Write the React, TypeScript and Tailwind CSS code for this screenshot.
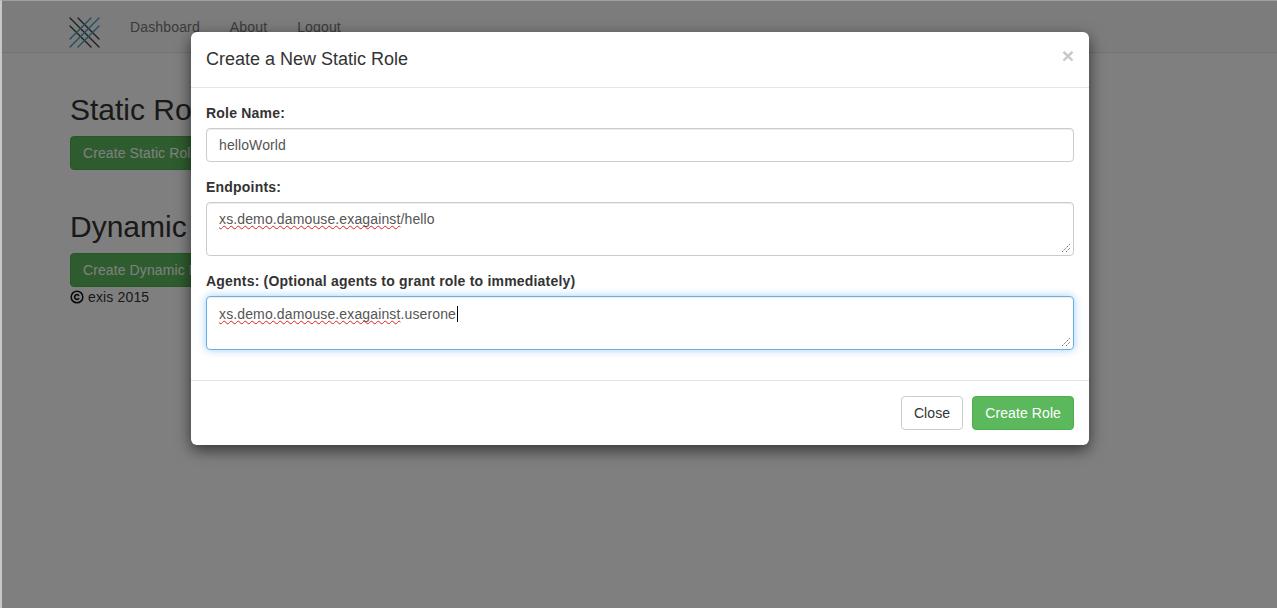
import { Copyright } from "lucide-react";

function Logo() {
  return (
    <svg width="32" height="32" viewBox="69 16 32 32" className="shrink-0">
      <g stroke="#3c3c3c" strokeWidth="1.3" strokeLinecap="round">
        <line x1="70" y1="18" x2="99" y2="47" />
        <line x1="78" y1="18" x2="99" y2="39" />
        <line x1="70" y1="26" x2="91" y2="47" />
      </g>
      <g stroke="#3a9cc0" strokeWidth="1.3" strokeLinecap="round">
        <line x1="70" y1="47" x2="99" y2="18" />
        <line x1="70" y1="39" x2="91" y2="18" />
        <line x1="78" y1="47" x2="99" y2="26" />
      </g>
    </svg>
  );
}

function Misspelt({ children }: { children: React.ReactNode }) {
  return <span className="underline decoration-wavy decoration-[#e02020] decoration-1 underline-offset-1 [text-decoration-skip-ink:none]">{children}</span>;
}

function Grip() {
  return (
    <svg width="10" height="10" viewBox="0 0 10 10" className="absolute right-0.5 bottom-0.5">
      <path d="M1 9L9 1M5 9L9 5" stroke="#666" strokeWidth="1" strokeDasharray="1.4 1" />
    </svg>
  );
}

function Area({ focused, children }: { focused?: boolean; children: React.ReactNode }) {
  return (
    <div className={`relative h-[54px] rounded border px-3 py-1.5 text-[14px] leading-5 tracking-[0.13px] text-[#555] ${focused ? "border-[#66afe9] shadow-[inset_0_1px_1px_rgba(0,0,0,0.075),0_0_8px_rgba(102,175,233,0.6)]" : "border-[#ccc] shadow-[inset_0_1px_1px_rgba(0,0,0,0.075)]"}`}>
      {children}
      <Grip />
    </div>
  );
}

export default function App() {
  return (
    <div className="relative h-[608px] w-[1277px] overflow-hidden bg-white font-['Liberation_Sans',Arial,sans-serif] text-[14px] leading-5 text-[#333]">
      <nav className="flex h-[53px] items-start border-b border-[#e7e7e7] bg-[#f8f8f8] pl-[69px] pt-[16px]">
        <Logo />
        <div className="ml-[29px] mt-[1px] flex gap-[30px] tracking-[0.15px] text-[#777]">
          <span>Dashboard</span>
          <span>About</span>
          <span>Logout</span>
        </div>
      </nav>
      <main className="pl-[70px]">
        <h1 className="mt-[40px] text-[30px] leading-[33px] font-normal">Static Roles</h1>
        <button className="mt-[10px] block h-[34px] rounded border border-[#4cae4c] bg-[#5cb85c] px-3 tracking-[0.1px] text-white">Create Static Role</button>
        <h1 className="mt-[40px] text-[30px] leading-[33px] font-normal">Dynamic Roles</h1>
        <button className="mt-[10px] block h-[34px] rounded border border-[#4cae4c] bg-[#5cb85c] px-3 tracking-[0.1px] text-white">Create Dynamic Role</button>
        <p className="flex items-center gap-1 tracking-[0.15px]">
          <Copyright size={14} strokeWidth={2.6} className="shrink-0 text-[#111]" />
          <span>exis 2015</span>
        </p>
      </main>

      <div className="absolute inset-0 border-l-2 border-t border-l-[#c8c8c8] border-t-[#a0a0a0] bg-black/50">
        <div className="absolute left-[189px] top-[31px] w-[898px] rounded-md bg-white shadow-[0_5px_15px_rgba(0,0,0,0.6)]">
          <header className="flex h-[56px] items-start justify-between border-b border-[#e5e5e5] px-[15px] pt-[15px]">
            <h4 className="text-[18px] leading-[25px] font-normal text-[#333]">Create a New Static Role</h4>
            <span className="-mt-[2px] text-[21px] leading-[21px] font-bold text-[#c8c8c8]">×</span>
          </header>
          <div className="flex flex-col gap-[15px] p-[15px]">
            <div>
              <label className="mb-[5px] block font-bold tracking-[0.2px]">Role Name:</label>
              <div className="h-[34px] rounded border border-[#ccc] px-3 py-1.5 tracking-[0.1px] text-[#555] shadow-[inset_0_1px_1px_rgba(0,0,0,0.075)]">helloWorld</div>
            </div>
            <div>
              <label className="mb-[5px] block font-bold tracking-[0.2px]">Endpoints:</label>
              <Area><Misspelt>xs.demo.damouse.exagainst</Misspelt>/hello</Area>
            </div>
            <div className="mb-[15px]">
              <label className="mb-[5px] block font-bold tracking-[0.2px]">Agents: (Optional agents to grant role to immediately)</label>
              <Area focused>
                <Misspelt>xs.demo.damouse.exagainst</Misspelt>.userone
                <span className="ml-px inline-block h-4 w-px translate-y-[3px] bg-black" />
              </Area>
            </div>
          </div>
          <footer className="flex justify-end gap-[9px] border-t border-[#e5e5e5] p-[15px] tracking-[0.1px]">
            <button className="h-[34px] rounded border border-[#ccc] bg-white px-3 text-[#333]">Close</button>
            <button className="h-[34px] rounded border border-[#4cae4c] bg-[#5cb85c] px-3 text-white">Create Role</button>
          </footer>
        </div>
      </div>
    </div>
  );
}
